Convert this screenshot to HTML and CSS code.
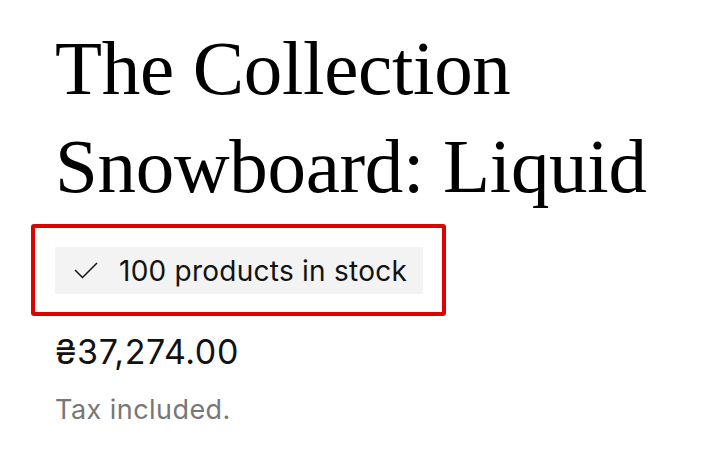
FILE: index.html
```html
<!DOCTYPE html>
<html lang="en">
<head>
    <meta charset="UTF-8">
    <meta name="viewport" content="width=device-width, initial-scale=1.0">
    <title>The Collection Snowboard: Liquid</title>
    <link rel="stylesheet" href="styles.css">
</head>
<body>

<div class="product-info">
    <h1 class="product-title">The Collection Snowboard: Liquid</h1>

    <div class="inventory-highlight">
        <p class="inventory">
            <svg class="icon-check" width="24" height="18" viewBox="0 0 24 18" aria-hidden="true">
                <path d="M1 8 L8.5 15.5 L23 1" fill="none" stroke="#121212" stroke-width="1.5"/>
            </svg>
            <span>100 products in stock</span>
        </p>
    </div>

    <div class="price">₴37,274.00</div>
    <small class="tax-note">Tax included.</small>
</div>

</body>
</html>
```

FILE: styles.css
```css
/* Base */
body {
    margin: 0;
    background-color: #fff;
    color: #121212;
    font-family: Inter, "Noto Sans", sans-serif;
}
.product-info {
    padding: 0 0 0 55px;
    width: 630px;
}
.product-title {
    margin: 0;
    padding-top: 19px;
    font-family: "Liberation Serif", "Times New Roman", serif;
    font-weight: normal;
    font-size: 77px;
    line-height: 98px;
    letter-spacing: -0.3px;
    color: #000;
}

/* Stock badge */
.inventory-highlight {
    display: inline-block;
    margin: 9px 0 0 -24px;
    padding: 19px 19px 18px 20px;
    border: 4px solid #e00000;
    border-radius: 3px;
}
.inventory {
    display: flex;
    align-items: center;
    gap: 21px;
    margin: 0;
    height: 47px;
    padding: 0 16px 0 19px;
    background-color: #f3f3f3;
    font-size: 28px;
    letter-spacing: 0.25px;
}
.icon-check {
    flex-shrink: 0;
}

/* Price */
.price {
    margin-top: 14px;
    font-size: 34px;
    line-height: 44px;
    letter-spacing: 0.6px;
}
.tax-note {
    display: block;
    margin-top: 19px;
    font-size: 27px;
    letter-spacing: 0.45px;
    color: #777;
}
```
